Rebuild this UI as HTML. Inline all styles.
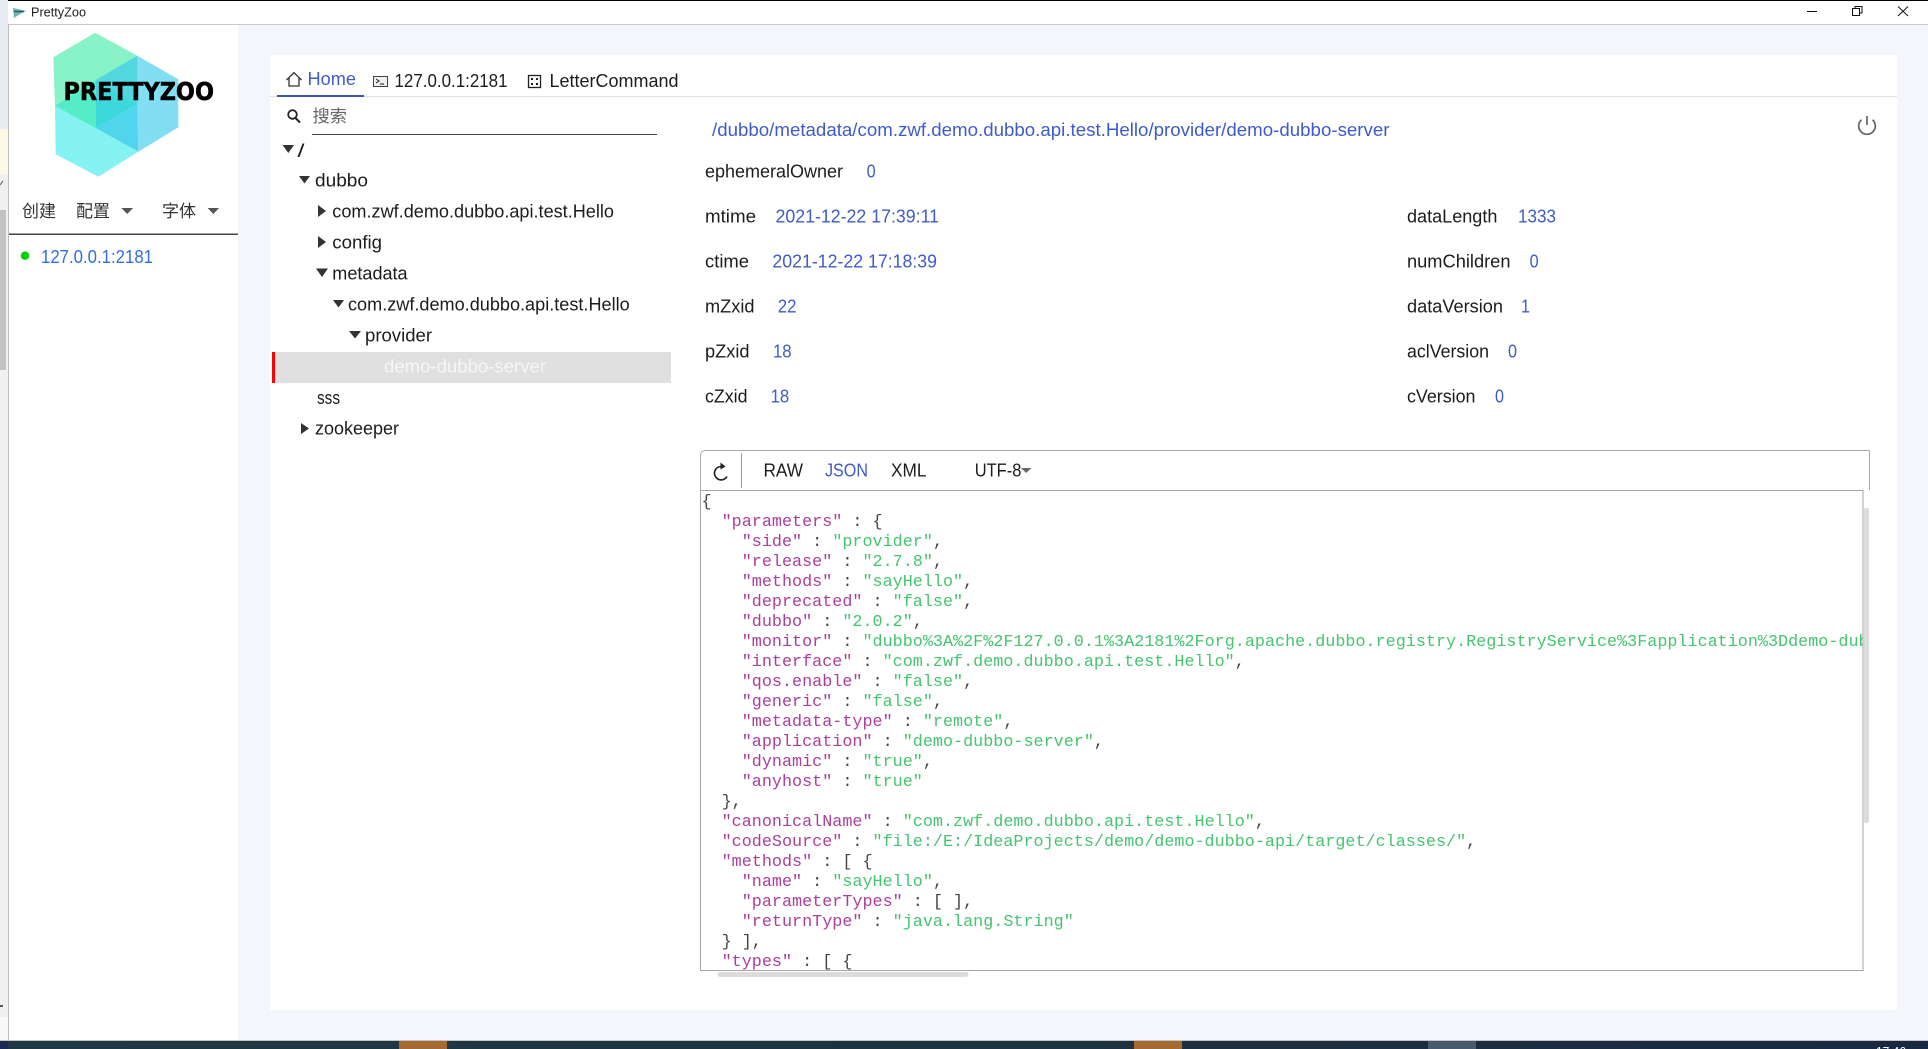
<!DOCTYPE html>
<html lang="zh">
<head>
<meta charset="utf-8">
<title>PrettyZoo</title>
<style>
html,body{margin:0;padding:0;width:1928px;height:1049px;overflow:hidden;background:#f3f6fa}
svg{display:block}
text{font-family:"Liberation Sans","Noto Sans CJK SC",sans-serif;font-size:18px;fill:#1c1c1c}
.b{fill:#3f5bc8}
.c text{font-family:"Liberation Mono",monospace;font-size:16.77px;fill:#444;white-space:pre}
.c .k{fill:#ab3f9b}
.c .s{fill:#46c470}
</style>
</head>
<body>
<svg xmlns="http://www.w3.org/2000/svg" width="1928" height="1049" viewBox="0 0 1928 1049">
<defs>
<linearGradient id="tb" x1="0" x2="1" y1="0" y2="0"><stop offset="0" stop-color="#203841"/><stop offset=".55" stop-color="#1f323f"/><stop offset="1" stop-color="#1b2842"/></linearGradient>
<clipPath id="cc"><rect x="701" y="492" width="1162" height="478"/></clipPath>
</defs>

<!-- backgrounds -->
<rect width="1928" height="1049" fill="#f3f6fa"/>
<rect x="0" y="0" width="8" height="129" fill="#e9ecf4"/>
<rect x="0" y="129" width="8" height="45" fill="#fff8e5"/>
<rect x="0" y="174" width="8" height="843" fill="#f0f0f0"/>
<rect x="0" y="210" width="6" height="160" fill="#c2c2c2"/>
<rect x="0" y="1017" width="8" height="23" fill="#f9f9f9"/>
<path d="M0 185 L3 181" stroke="#555" stroke-width="1" fill="none"/>
<rect x="0" y="1005" width="3" height="2" fill="#555"/>
<rect x="8" y="1" width="1920" height="23" fill="#fff"/>
<rect x="8" y="0" width="1920" height="1" fill="#000"/>
<rect x="8" y="24" width="1920" height="1" fill="#c8c8c8"/>
<rect x="8" y="24" width="1" height="1016" fill="#bdbdbd"/>
<rect x="9" y="25" width="229" height="1015" fill="#fff"/>
<rect x="270" y="55" width="1627" height="955" fill="#fff"/>

<!-- taskbar -->
<rect x="0" y="1040" width="1928" height="1" fill="#c4c4c4"/>
<rect x="0" y="1041" width="1928" height="8" fill="url(#tb)"/>
<rect x="0" y="1041" width="8" height="8" fill="#1b2a52"/>
<rect x="399" y="1041" width="48" height="8" fill="#a46a34"/>
<rect x="1134" y="1041" width="48" height="8" fill="#a46a34"/>
<rect x="1428" y="1041" width="48" height="8" fill="#4a5a6c"/>
<text x="1876" y="1056" textLength="30" lengthAdjust="spacingAndGlyphs" style="font-size:13px;fill:#fff">17:46</text>

<!-- title bar -->
<polygon points="13,8 20,9.5 26,11 20,14 14,18" fill="#6cb4ae"/>
<path d="M14 11.5 H24" stroke="#2a5a60" stroke-width="1.4"/>
<text x="31" y="16.5" textLength="55" lengthAdjust="spacingAndGlyphs" style="font-size:12.5px">PrettyZoo</text>
<path d="M1807 11.5 H1817" stroke="#111" stroke-width="1"/>
<path d="M1852.5 8.5 H1859.5 V15.5 H1852.5 Z M1855 8 V6.5 H1862 V13 H1860" stroke="#111" stroke-width="1" fill="none"/>
<path d="M1898 6.5 L1908 16 M1908 6.5 L1898 16" stroke="#111" stroke-width="1" fill="none"/>

<!-- logo -->
<polygon points="95,32.7 137.3,55.7 137.3,104 96,128.3 55,106 53.3,57.3" fill="#87f3c7"/>
<polygon points="137.3,55.7 178.3,79.3 178.3,127.3 138.3,151.7 137.3,104" fill="#82def3"/>
<polygon points="55,106 96,128.3 138.3,151.7 98.3,176.7 55.7,154.3" fill="#85f3f2"/>
<polygon points="96,80 137.3,55.7 137.3,104" fill="#52d6e0"/>
<polygon points="96,80 137.3,104 96,128.3" fill="#3cd8dc"/>
<polygon points="55,106 96,80 96,128.3" fill="#55ecc8"/>
<polygon points="96,128.3 137.3,104 138.3,151.7" fill="#50d6ec"/>
<text x="63.5" y="100" textLength="150.5" lengthAdjust="spacingAndGlyphs" style="font-family:'DejaVu Sans',sans-serif;font-size:24.7px;font-weight:bold;fill:#000;stroke:#000;stroke-width:.5">PRETTYZOO</text>

<!-- sidebar toolbar -->
<text x="22" y="217" textLength="34" lengthAdjust="spacingAndGlyphs" style="font-size:17px;fill:#333">创建</text>
<text x="76" y="217" textLength="34" lengthAdjust="spacingAndGlyphs" style="font-size:17px;fill:#333">配置</text>
<polygon points="121.4,208 133,208 127.2,214" fill="#555"/>
<text x="162" y="217" textLength="34" lengthAdjust="spacingAndGlyphs" style="font-size:17px;fill:#333">字体</text>
<polygon points="207.6,208 219,208 213.3,214" fill="#555"/>
<rect x="9" y="233.5" width="229" height="1.5" fill="#444"/>
<circle cx="25" cy="255.7" r="4.2" fill="#00d000"/>
<text x="41" y="263" textLength="112" lengthAdjust="spacingAndGlyphs" style="fill:#2f6fe0">127.0.0.1:2181</text>

<!-- tabs -->
<path d="M286.5 80 L294 72.7 L301.5 80 M289 78 V86 H299 V78" stroke="#333" stroke-width="1.3" fill="none"/>
<text class="b" x="307.5" y="85" textLength="48.5" lengthAdjust="spacingAndGlyphs">Home</text>
<rect x="373.5" y="76.5" width="14" height="10" fill="#efefef" stroke="#444" stroke-width="1"/>
<path d="M376 79 l3 2 -3 2 M380 84 h4" stroke="#222" stroke-width="1" fill="none"/>
<text x="394.5" y="87" textLength="113" lengthAdjust="spacingAndGlyphs">127.0.0.1:2181</text>
<rect x="528.5" y="75.5" width="12" height="12" fill="#fff" stroke="#222" stroke-width="1.3"/>
<path d="M531 78 h2 v2 h-2 Z M536 78 h2 v2 h-2 Z M531 83 h2 v2 h-2 Z M536 83 h2 v2 h-2 Z" fill="#222"/>
<text x="549.5" y="87" textLength="129" lengthAdjust="spacingAndGlyphs">LetterCommand</text>
<rect x="270" y="96" width="1627" height="1" fill="#e0e0e0"/>
<rect x="277" y="95" width="87" height="2" fill="#3f51b5"/>

<!-- search -->
<circle cx="292.5" cy="114.5" r="4.3" fill="none" stroke="#222" stroke-width="1.8"/>
<path d="M295.5 118 L300 122.5" stroke="#222" stroke-width="2"/>
<text x="312.5" y="122" textLength="34.5" lengthAdjust="spacingAndGlyphs" style="font-size:17px;fill:#666">搜索</text>
<rect x="312" y="134" width="345" height="1" fill="#444"/>

<!-- tree -->
<rect x="272" y="352" width="399" height="31" fill="#e0e0e0"/>
<rect x="272" y="352" width="3" height="31" fill="#f00"/>
<polygon points="282.6,145 294,145 288.3,153" fill="#333"/>
<text x="297.5" y="157" textLength="7" lengthAdjust="spacingAndGlyphs">/</text>
<polygon points="299,176 310,176 304.5,183.5" fill="#333"/>
<text x="315" y="186.7" textLength="53" lengthAdjust="spacingAndGlyphs">dubbo</text>
<polygon points="318,205 326,211 318,217" fill="#333"/>
<text x="332.3" y="217.7" textLength="281.7" lengthAdjust="spacingAndGlyphs">com.zwf.demo.dubbo.api.test.Hello</text>
<polygon points="318,236 326,242 318,248" fill="#333"/>
<text x="332.3" y="248.7" textLength="49.7" lengthAdjust="spacingAndGlyphs">config</text>
<polygon points="316,268.5 328,268.5 322,277" fill="#333"/>
<text x="332.3" y="279.7" textLength="75.3" lengthAdjust="spacingAndGlyphs">metadata</text>
<polygon points="333,300 344,300 338.5,307.5" fill="#333"/>
<text x="348" y="310.7" textLength="281.7" lengthAdjust="spacingAndGlyphs">com.zwf.demo.dubbo.api.test.Hello</text>
<polygon points="349,331 361,331 355,338.5" fill="#333"/>
<text x="365" y="341.7" textLength="67" lengthAdjust="spacingAndGlyphs">provider</text>
<text x="384" y="372.7" textLength="162" lengthAdjust="spacingAndGlyphs" style="fill:#f6f6f6">demo-dubbo-server</text>
<text x="317" y="404" textLength="23" lengthAdjust="spacingAndGlyphs">sss</text>
<polygon points="301,423 309,428.5 301,434" fill="#333"/>
<text x="315" y="434.7" textLength="84" lengthAdjust="spacingAndGlyphs">zookeeper</text>

<!-- detail -->
<text class="b" x="712" y="136" textLength="677.5" lengthAdjust="spacingAndGlyphs">/dubbo/metadata/com.zwf.demo.dubbo.api.test.Hello/provider/demo-dubbo-server</text>
<path d="M1861.5 119.8 A8.3 8.3 0 1 0 1872.5 119.8 M1867 116 V125" stroke="#666" stroke-width="1.7" fill="none"/>

<text x="705" y="177.7" textLength="138" lengthAdjust="spacingAndGlyphs">ephemeralOwner</text>
<text class="b" x="866.6" y="177.7" textLength="9" lengthAdjust="spacingAndGlyphs">0</text>
<text x="705" y="222.7" textLength="51" lengthAdjust="spacingAndGlyphs">mtime</text>
<text class="b" x="775.5" y="222.7" textLength="163.5" lengthAdjust="spacingAndGlyphs">2021-12-22 17:39:11</text>
<text x="705" y="267.7" textLength="44" lengthAdjust="spacingAndGlyphs">ctime</text>
<text class="b" x="772.4" y="267.7" textLength="164.6" lengthAdjust="spacingAndGlyphs">2021-12-22 17:18:39</text>
<text x="705" y="312.7" textLength="49.5" lengthAdjust="spacingAndGlyphs">mZxid</text>
<text class="b" x="777.8" y="312.7" textLength="18.7" lengthAdjust="spacingAndGlyphs">22</text>
<text x="705" y="357.7" textLength="44.5" lengthAdjust="spacingAndGlyphs">pZxid</text>
<text class="b" x="773" y="357.7" textLength="18.6" lengthAdjust="spacingAndGlyphs">18</text>
<text x="705" y="402.7" textLength="42.5" lengthAdjust="spacingAndGlyphs">cZxid</text>
<text class="b" x="770.6" y="402.7" textLength="18.6" lengthAdjust="spacingAndGlyphs">18</text>

<text x="1407" y="222.7" textLength="90.4" lengthAdjust="spacingAndGlyphs">dataLength</text>
<text class="b" x="1518" y="222.7" textLength="38" lengthAdjust="spacingAndGlyphs">1333</text>
<text x="1407" y="267.7" textLength="103.5" lengthAdjust="spacingAndGlyphs">numChildren</text>
<text class="b" x="1529.6" y="267.7" textLength="9" lengthAdjust="spacingAndGlyphs">0</text>
<text x="1407" y="312.7" textLength="96" lengthAdjust="spacingAndGlyphs">dataVersion</text>
<text class="b" x="1521" y="312.7" textLength="9" lengthAdjust="spacingAndGlyphs">1</text>
<text x="1407" y="357.7" textLength="82" lengthAdjust="spacingAndGlyphs">aclVersion</text>
<text class="b" x="1508" y="357.7" textLength="9" lengthAdjust="spacingAndGlyphs">0</text>
<text x="1407" y="402.7" textLength="68.5" lengthAdjust="spacingAndGlyphs">cVersion</text>
<text class="b" x="1495" y="402.7" textLength="9" lengthAdjust="spacingAndGlyphs">0</text>

<!-- editor -->
<path d="M700.5 490.5 V455 A5 5 0 0 1 705.5 450.5 H1869.5 V490" fill="none" stroke="#aaa" stroke-width="1"/>
<rect x="700.5" y="490.5" width="1162.5" height="480" fill="#fff" stroke="#a5a5a5" stroke-width="1"/>
<path d="M721.5 466.5 A6.7 6.7 0 1 0 727 476.5" fill="none" stroke="#222" stroke-width="1.6"/>
<polygon points="720.5,462.5 725.5,466.5 720.5,469.5" fill="#222"/>
<rect x="741" y="453" width="1" height="35" fill="#999"/>
<text x="763.5" y="476.7" textLength="39.5" lengthAdjust="spacingAndGlyphs">RAW</text>
<text class="b" x="825" y="476.7" textLength="43" lengthAdjust="spacingAndGlyphs">JSON</text>
<text x="891" y="476.7" textLength="35.5" lengthAdjust="spacingAndGlyphs">XML</text>
<text x="974.7" y="476.7" textLength="46.7" lengthAdjust="spacingAndGlyphs">UTF-8</text>
<polygon points="1021,468 1031.4,468 1026.2,473" fill="#666"/>

<g clip-path="url(#cc)"><g class="c" transform="translate(.5,-.7)">
<text x="701" y="506.7">{</text>
<text x="701" y="526.7" xml:space="preserve">  <tspan class="k">"parameters"</tspan> : {</text>
<text x="701" y="546.7" xml:space="preserve">    <tspan class="k">"side"</tspan> : <tspan class="s">"provider"</tspan>,</text>
<text x="701" y="566.7" xml:space="preserve">    <tspan class="k">"release"</tspan> : <tspan class="s">"2.7.8"</tspan>,</text>
<text x="701" y="586.7" xml:space="preserve">    <tspan class="k">"methods"</tspan> : <tspan class="s">"sayHello"</tspan>,</text>
<text x="701" y="606.7" xml:space="preserve">    <tspan class="k">"deprecated"</tspan> : <tspan class="s">"false"</tspan>,</text>
<text x="701" y="626.7" xml:space="preserve">    <tspan class="k">"dubbo"</tspan> : <tspan class="s">"2.0.2"</tspan>,</text>
<text x="701" y="646.7" xml:space="preserve">    <tspan class="k">"monitor"</tspan> : <tspan class="s">"dubbo%3A%2F%2F127.0.0.1%3A2181%2Forg.apache.dubbo.registry.RegistryService%3Fapplication%3Ddemo-dubbo-server</tspan></text>
<text x="701" y="666.7" xml:space="preserve">    <tspan class="k">"interface"</tspan> : <tspan class="s">"com.zwf.demo.dubbo.api.test.Hello"</tspan>,</text>
<text x="701" y="686.7" xml:space="preserve">    <tspan class="k">"qos.enable"</tspan> : <tspan class="s">"false"</tspan>,</text>
<text x="701" y="706.7" xml:space="preserve">    <tspan class="k">"generic"</tspan> : <tspan class="s">"false"</tspan>,</text>
<text x="701" y="726.7" xml:space="preserve">    <tspan class="k">"metadata-type"</tspan> : <tspan class="s">"remote"</tspan>,</text>
<text x="701" y="746.7" xml:space="preserve">    <tspan class="k">"application"</tspan> : <tspan class="s">"demo-dubbo-server"</tspan>,</text>
<text x="701" y="766.7" xml:space="preserve">    <tspan class="k">"dynamic"</tspan> : <tspan class="s">"true"</tspan>,</text>
<text x="701" y="786.7" xml:space="preserve">    <tspan class="k">"anyhost"</tspan> : <tspan class="s">"true"</tspan></text>
<text x="701" y="806.7" xml:space="preserve">  },</text>
<text x="701" y="826.7" xml:space="preserve">  <tspan class="k">"canonicalName"</tspan> : <tspan class="s">"com.zwf.demo.dubbo.api.test.Hello"</tspan>,</text>
<text x="701" y="846.7" xml:space="preserve">  <tspan class="k">"codeSource"</tspan> : <tspan class="s">"file:/E:/IdeaProjects/demo/demo-dubbo-api/target/classes/"</tspan>,</text>
<text x="701" y="866.7" xml:space="preserve">  <tspan class="k">"methods"</tspan> : [ {</text>
<text x="701" y="886.7" xml:space="preserve">    <tspan class="k">"name"</tspan> : <tspan class="s">"sayHello"</tspan>,</text>
<text x="701" y="906.7" xml:space="preserve">    <tspan class="k">"parameterTypes"</tspan> : [ ],</text>
<text x="701" y="926.7" xml:space="preserve">    <tspan class="k">"returnType"</tspan> : <tspan class="s">"java.lang.String"</tspan></text>
<text x="701" y="946.7" xml:space="preserve">  } ],</text>
<text x="701" y="966.7" xml:space="preserve">  <tspan class="k">"types"</tspan> : [ {</text>
</g></g>

<!-- scrollbars -->
<rect x="1864" y="508" width="5" height="315" rx="2" fill="#dcdcdc"/>
<rect x="717.5" y="972" width="251" height="5" rx="2.5" fill="#dcdcdc"/>
</svg>
</body>
</html>
